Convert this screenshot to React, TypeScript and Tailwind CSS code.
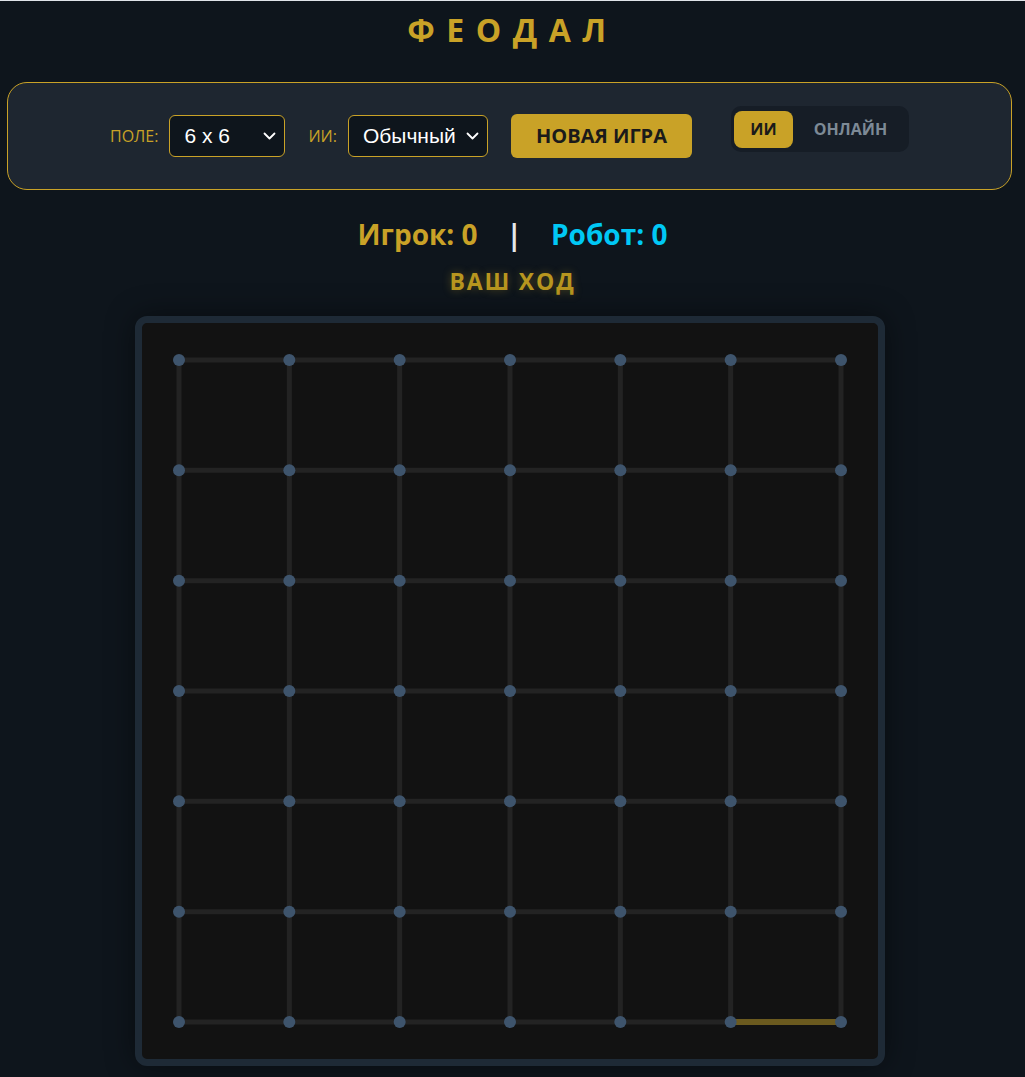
import React, { useState } from 'react';

const N = 6;
const PAD = 37;
const INNER = 736;
const STEP = (INNER - PAD * 2) / N;

type Mode = 'ai' | 'online';

const Select: React.FC<{ value: string; options: string[]; width: string }> = ({ value, options, width }) => (
  <div className={`relative ${width}`}>
    <select
      defaultValue={value}
      className="w-full h-[42px] appearance-none rounded-[6px] border border-[#c9a227] bg-[#0e151c] pl-[14px] pr-8 text-[21px] text-white outline-none font-['Liberation_Sans',Arial,sans-serif]"
    >
      {options.map((o) => (
        <option key={o}>{o}</option>
      ))}
    </select>
    <svg
      className="pointer-events-none absolute right-[9px] top-1/2 -translate-y-1/2"
      width="13"
      height="8"
      viewBox="0 0 13 8"
      fill="none"
    >
      <path d="M1.5 1.5 6.5 6.5l5-5" stroke="white" strokeWidth="1.8" strokeLinecap="round" strokeLinejoin="round" />
    </svg>
  </div>
);

const Board: React.FC = () => {
  const pts = Array.from({ length: N + 1 }, (_, i) => PAD + i * STEP);
  return (
    <svg width={INNER} height={INNER} viewBox={`0 0 ${INNER} ${INNER}`} className="block">
      {pts.map((y) => (
        <line key={`h${y}`} x1={pts[0]} y1={y} x2={pts[N]} y2={y} stroke="#232323" strokeWidth="5" />
      ))}
      {pts.map((x) => (
        <line key={`v${x}`} x1={x} y1={pts[0]} x2={x} y2={pts[N]} stroke="#232323" strokeWidth="5" />
      ))}
      <line x1={pts[5]} y1={pts[N]} x2={pts[N]} y2={pts[N]} stroke="#6b5a1f" strokeWidth="6" />
      {pts.map((y) =>
        pts.map((x) => <circle key={`${x}-${y}`} cx={x} cy={y} r="6" fill="#3e546c" />)
      )}
    </svg>
  );
};

export default function App() {
  const [mode, setMode] = useState<Mode>('ai');

  return (
    <div className="min-h-screen bg-[#0e151c] font-['Open_Sans',sans-serif]">
      <div className="h-px bg-[#dfe3e8]" />
      <h1 className="pt-[10px] text-center text-[32px] leading-[38px] font-bold tracking-[0.36em] text-[#c9a227]">
        ФЕОДАЛ
      </h1>

      <div className="mt-[33px] ml-[7px] w-[1005px] h-[108px] rounded-[20px] border border-[#c9a227] bg-[#1e2630] flex items-center justify-center">
        <div className="flex items-center gap-[11px]">
          <span className="text-[16px] text-[#c9a227]">ПОЛЕ:</span>
          <Select value="6 x 6" options={['4 x 4', '5 x 5', '6 x 6', '8 x 8']} width="w-[116px]" />
        </div>
        <div className="ml-[23px] flex items-center gap-[11px]">
          <span className="text-[16px] text-[#c9a227]">ИИ:</span>
          <Select value="Обычный" options={['Лёгкий', 'Обычный', 'Сложный']} width="w-[140px]" />
        </div>
        <button className="ml-[23px] w-[181px] h-[44px] rounded-[6px] bg-[#c9a227] text-[20px] font-bold text-[#1a1a1a]">
          НОВАЯ ИГРА
        </button>
        <div className="ml-[39px] mb-[14px] flex items-center w-[178px] h-[46px] rounded-[10px] bg-[#161d26] px-[3px]">
          <button
            onClick={() => setMode('ai')}
            className={`w-[59px] h-[37px] rounded-[8px] text-[16px] font-bold ${
              mode === 'ai' ? 'bg-[#c9a227] text-[#1a1a1a]' : 'text-[#7d8a96]'
            }`}
          >
            ИИ
          </button>
          <button
            onClick={() => setMode('online')}
            className={`ml-[3px] w-[109px] h-[37px] rounded-[8px] text-[16px] font-bold ${
              mode === 'online' ? 'bg-[#c9a227] text-[#1a1a1a]' : 'text-[#7d8a96]'
            }`}
          >
            ОНЛАЙН
          </button>
        </div>
      </div>

      <div className="mt-[23px] flex items-center justify-center text-[28px] leading-[42px] font-bold">
        <span className="text-[#c9a227]">Игрок: 0</span>
        <span className="mx-[29px] text-[#e5e7eb]">|</span>
        <span className="text-[#00c8f5]">Робот: 0</span>
      </div>
      <div className="mt-[10px] text-center text-[23px] leading-[32px] font-bold tracking-[0.08em] text-[#b8961f] [text-shadow:0_0_8px_rgba(201,162,39,0.35)]">
        ВАШ ХОД
      </div>

      <div className="mt-[19px] flex justify-center pr-[5px]">
        <div className="rounded-[12px] border-[7px] border-[#1e2a36] bg-[#121212] shadow-[0_0_30px_rgba(0,0,0,0.45)]">
          <Board />
        </div>
      </div>
    </div>
  );
}
